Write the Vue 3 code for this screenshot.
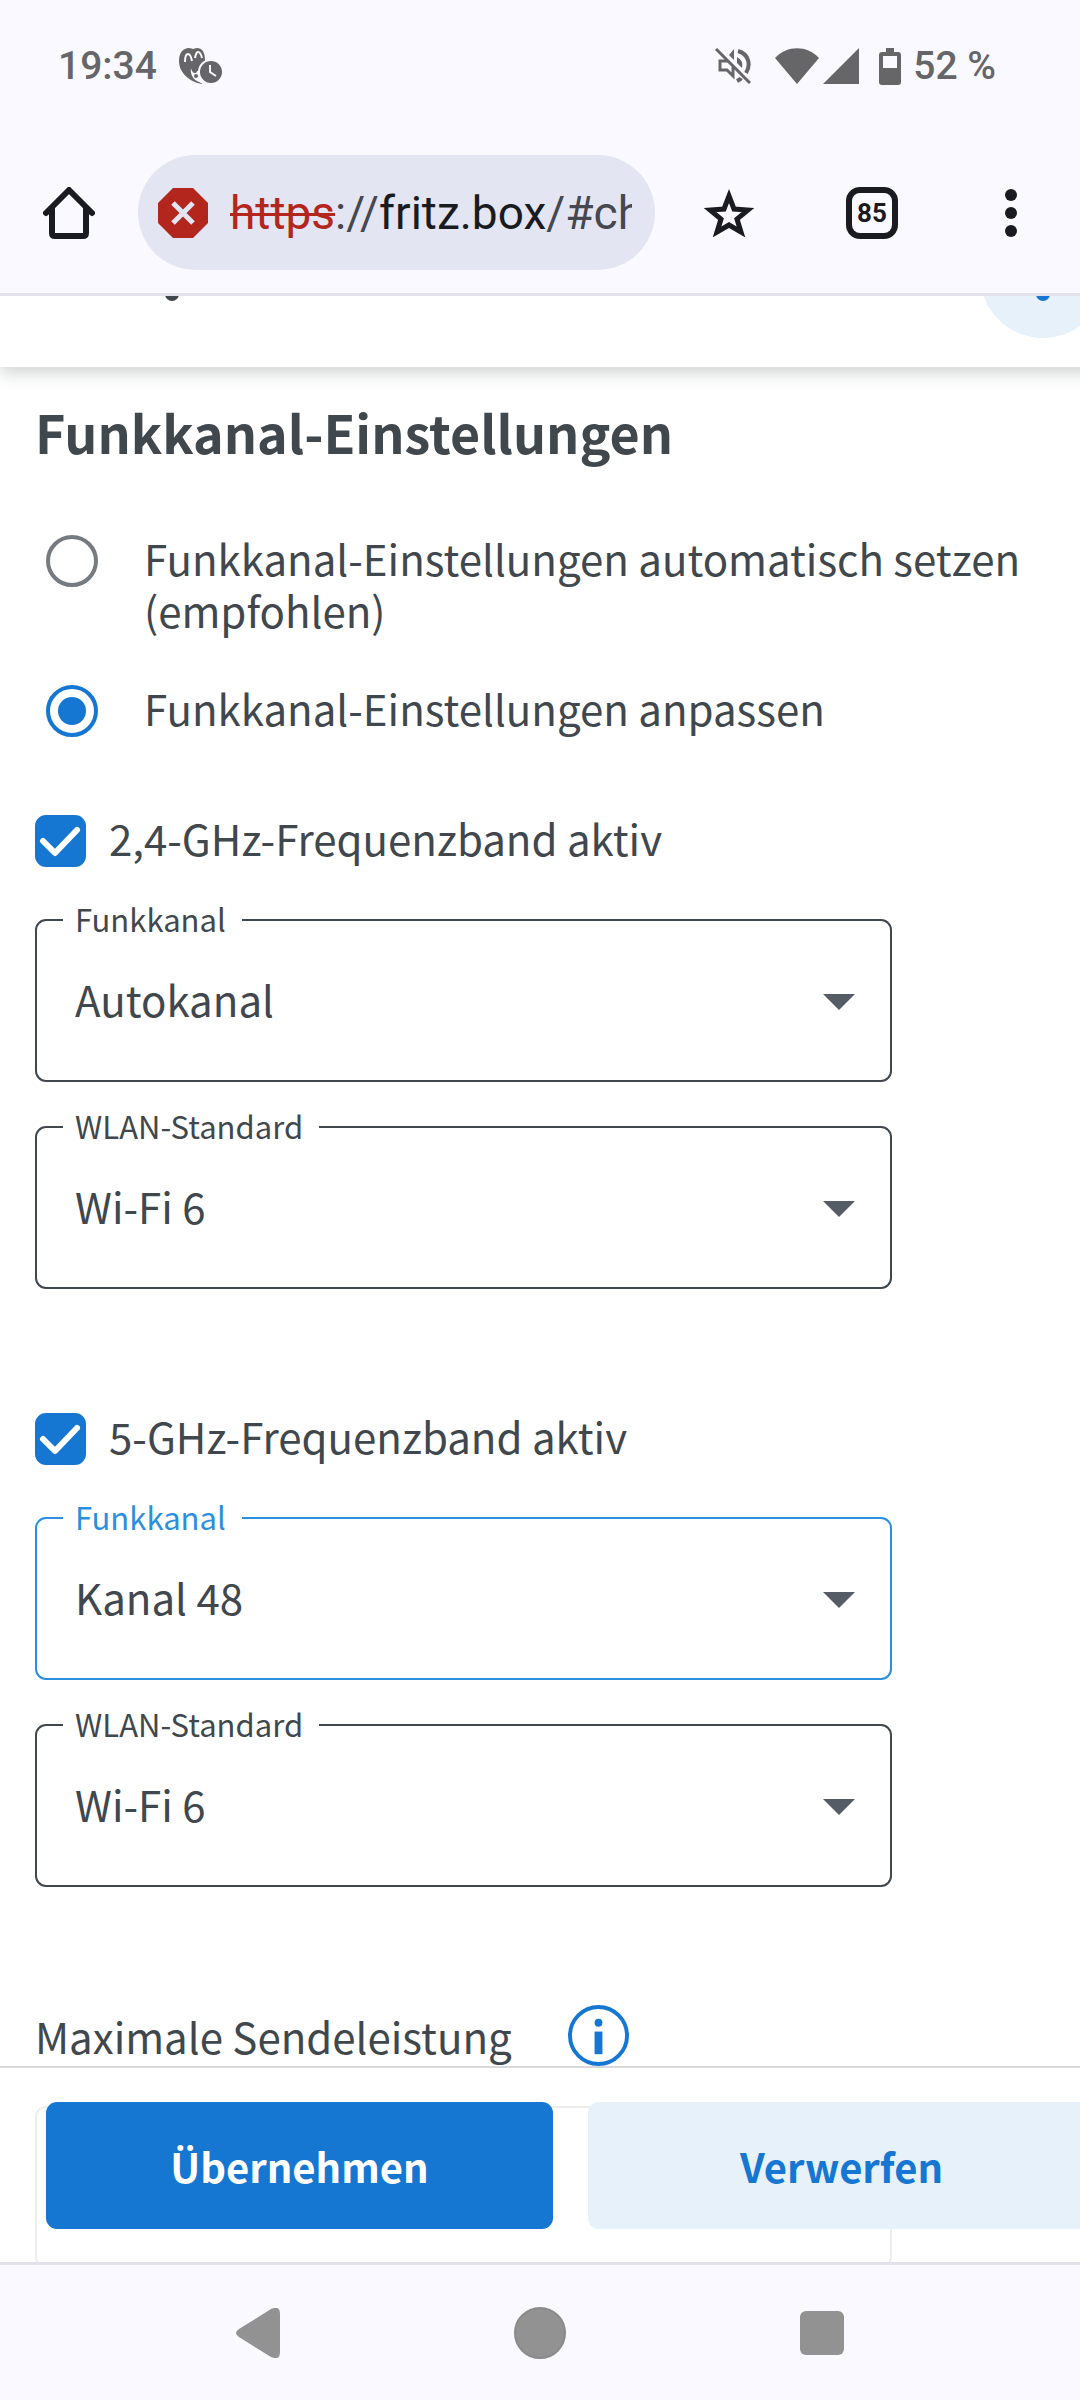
<script setup>
import { ref } from 'vue'

const mode = ref('manual')
const bands = ref([
  {
    id: 'b24',
    label: '2,4-GHz-Frequenzband aktiv',
    active: true,
    fields: [
      { id: 'channel', label: 'Funkkanal', value: 'Autokanal', focused: false },
      { id: 'standard', label: 'WLAN-Standard', value: 'Wi-Fi 6', focused: false },
    ],
  },
  {
    id: 'b5',
    label: '5-GHz-Frequenzband aktiv',
    active: true,
    fields: [
      { id: 'channel', label: 'Funkkanal', value: 'Kanal 48', focused: true },
      { id: 'standard', label: 'WLAN-Standard', value: 'Wi-Fi 6', focused: false },
    ],
  },
])
</script>

<template>
  <div class="screen">
    <div class="status">
      <div class="status-group">
        <span>19:34</span>
        <svg width="44" height="36" viewBox="0 0 44 36" fill="#666668">
          <path d="M0 13C0 5 4 0 10 0c2 0 3 1 4 1s2-1 4-1c5 0 8 4 8 12l-3 22v2C11 34 0 25 0 13Z" />
          <path d="M6 14c0-6 1-8 3-8s3 2 4 7M16 10c1-4 1-6 3-6s3 2 4 6" fill="none" stroke="#faf9ff" stroke-width="2" />
          <path d="M12 20c-1 6 2 12 8 14l4 2V22l-6 1-3 2-3-5Z" fill="#faf9ff" />
          <path d="M12 20c1 4 2 5 5 5l3-5-4-3Z" />
          <circle cx="17" cy="28" r="2" />
          <circle cx="32" cy="24" r="13" fill="#faf9ff" />
          <circle cx="32" cy="24" r="11" />
          <path d="M31 17v7l6 4" fill="none" stroke="#faf9ff" stroke-width="2" />
        </svg>
      </div>
      <div class="status-group right">
        <svg class="mute" width="36" height="36" viewBox="0 0 36 36" fill="none" stroke="#666668" stroke-width="4">
          <path d="M1 1l34 34" stroke-width="3" />
          <path d="M13 13H5v9h7l6 6V19" stroke-width="3" />
          <path d="M23 3c11 3 13 14 8 22M22 33c2-1 3-1 4-3" />
          <path d="M19 1v11l-5-5ZM22 9c5 3 6 6 5 11l-5-5Z" fill="#666668" stroke="none" />
        </svg>
        <svg class="wifi" width="44" height="36" viewBox="0 0 44 36" fill="#666668">
          <path d="M22 36 0 10C12-3 32-3 44 10Z" />
        </svg>
        <svg class="signal" width="36" height="36" viewBox="0 0 36 36" fill="#666668"><path d="M0 36 36 0v36Z" /></svg>
        <svg class="battery" width="22" height="37" viewBox="0 0 22 37">
          <path d="M7 0h8v4h4q3 0 3 3v27q0 3-3 3H3q-3 0-3-3V7q0-3 3-3h4Z" fill="#666668" />
          <path d="M4 8h14v12H4Z" fill="#faf9ff" />
        </svg>
        <span>52 %</span>
      </div>
    </div>

    <div class="toolbar">
      <button class="tool home" aria-label="Startseite">
        <svg width="52" height="52" viewBox="0 0 52 52" fill="none" stroke="#1a1b20" stroke-width="6" stroke-linejoin="round" stroke-linecap="round">
          <path d="M3 26 26 3l23 23" />
          <path d="M9 22v24q0 3 3 3h28q3 0 3-3V22" />
        </svg>
      </button>
      <div class="omnibox">
        <svg width="50" height="50" viewBox="0 0 50 50">
          <path d="M15 0h20l15 15v20L35 50H15L0 35V15Z" fill="#b3261e" />
          <path d="m15 15 20 20m0-20L15 35" stroke="#e3e5f2" stroke-width="5" />
        </svg>
        <div class="url"><s>https</s>://<b>fritz.box</b>/#ch</div>
      </div>
      <button class="tool star" aria-label="Lesezeichen">
        <svg width="50" height="48" viewBox="0 0 50 48" fill="none" stroke="#1a1b20" stroke-width="5">
          <path d="m25 7 5 13 14 1-11 9 4 13-12-7-12 7 4-13L6 21l14-1Z" />
        </svg>
      </button>
      <button class="tool tabs" aria-label="Tabs"><span>85</span></button>
      <button class="tool menu" aria-label="Menü">
        <svg width="12" height="48" viewBox="0 0 12 48" fill="#1a1b20">
          <circle cx="6" cy="6" r="6" /><circle cx="6" cy="24" r="6" /><circle cx="6" cy="42" r="6" />
        </svg>
      </button>
    </div>

    <main class="view">
      <header class="site-header">
        <svg class="crumb" width="14" height="14" viewBox="0 0 14 14"><circle cx="7" cy="7" r="7" fill="#40474d" /></svg>
        <button class="help" aria-label="Hilfe">
          <svg width="14" height="14" viewBox="0 0 14 14"><circle cx="7" cy="7" r="7" fill="#1677d2" /></svg>
        </button>
      </header>

      <form class="content" @submit.prevent>
        <h1>Funkkanal-Einstellungen</h1>

        <label class="radio">
          <input v-model="mode" type="radio" name="mode" value="auto" />
          <span>Funkkanal-Einstellungen automatisch setzen (empfohlen)</span>
        </label>
        <label class="radio">
          <input v-model="mode" type="radio" name="mode" value="manual" />
          <span>Funkkanal-Einstellungen anpassen</span>
        </label>

        <section v-for="band in bands" :key="band.id" class="band">
          <label class="check">
            <span class="box">
              <input v-model="band.active" type="checkbox" />
              <svg v-if="band.active" width="51" height="52" viewBox="0 0 51 52" fill="none" stroke="#fff" stroke-width="6" stroke-linecap="round" stroke-linejoin="round">
                <path d="m8 26 12 12 22-23" />
              </svg>
            </span>
            <span>{{ band.label }}</span>
          </label>
          <div v-for="field in band.fields" :key="field.id" class="field" :class="{ focused: field.focused }">
            <label :for="band.id + field.id">{{ field.label }}</label>
            <select :id="band.id + field.id" v-model="field.value">
              <option>{{ field.value }}</option>
            </select>
            <svg class="arrow" width="32" height="16" viewBox="0 0 32 16"><path d="M0 0h32L16 16Z" fill="#555c66" /></svg>
          </div>
        </section>

        <div class="power">
          <span>Maximale Sendeleistung</span>
          <button type="button" class="info" aria-label="Information">
            <svg width="61" height="61" viewBox="0 0 62 62">
              <circle cx="31" cy="31" r="29" fill="none" stroke="#1677d2" stroke-width="4" />
              <circle cx="31" cy="18" r="4" fill="#1677d2" />
              <path d="M27 27h8v23h-8Z" fill="#1677d2" />
            </svg>
          </button>
        </div>
        <div class="field-outline"></div>
      </form>

      <div class="actions">
        <button class="primary">Übernehmen</button>
        <button class="secondary">Verwerfen</button>
      </div>
    </main>

    <nav class="nav">
      <button aria-label="Zurück">
        <svg width="44" height="50" viewBox="0 0 44 50" fill="#929293"><path d="M35 1q9-4 9 5v38q0 9-9 5L3 29q-6-4 0-8Z" /></svg>
      </button>
      <button aria-label="Startbildschirm">
        <svg width="52" height="52" viewBox="0 0 52 52"><circle cx="26" cy="26" r="25" fill="#929293" stroke="#8a8a8b" stroke-width="2" /></svg>
      </button>
      <button aria-label="Übersicht">
        <svg width="44" height="44" viewBox="0 0 44 44" fill="#929293"><rect width="44" height="44" rx="6" /></svg>
      </button>
    </nav>
  </div>
</template>

<style>
body {
  margin: 0;
  background: #fff;
}
</style>

<style scoped>
.screen {
  display: flex;
  flex-direction: column;
  min-height: 100vh;
  overflow: hidden;
  background: #fff;
  color: #40474d;
  font: 42px/52px "Noto Sans CJK SC", "Noto Sans", sans-serif;
}
svg {
  display: block;
  flex: none;
}
button {
  display: flex;
  align-items: center;
  justify-content: center;
  flex: none;
  border: 0;
  padding: 0;
  background: none;
  color: inherit;
  font: inherit;
}

.status {
  display: flex;
  justify-content: space-between;
  align-items: center;
  height: 132px;
  padding: 0 84px 0 58px;
  background: #faf9ff;
  color: #666668;
  font: 500 39px/48px Roboto, sans-serif;
}
.status-group {
  display: flex;
  align-items: center;
  gap: 22px;
}
.status-group.right {
  gap: 0;
}
.mute { margin-right: 24px; }
.wifi { margin-right: 4px; }
.signal { margin-right: 20px; }
.battery { margin-right: 12px; }

.toolbar {
  display: flex;
  align-items: center;
  height: 161px;
  background: #faf9ff;
  border-bottom: 3px solid #e3e1ec;
}
.tool {
  width: 140px;
  height: 120px;
}
.home,
.menu {
  width: 138px;
}
.star {
  width: 147px;
}
.omnibox {
  display: flex;
  flex: 1;
  align-items: center;
  gap: 22px;
  min-width: 0;
  height: 115px;
  box-sizing: border-box;
  padding: 0 23px 0 20px;
  border-radius: 60px;
  background: #e3e5f2;
}
.url {
  flex: 1;
  overflow: hidden;
  white-space: nowrap;
  color: #46474f;
  font: 46px/60px Roboto, sans-serif;
}
.url s {
  color: #b3261e;
  text-decoration-thickness: 3px;
}
.url b {
  color: #1a1b20;
  font-weight: 400;
}
.tabs span {
  display: flex;
  align-items: center;
  justify-content: center;
  width: 52px;
  height: 52px;
  box-sizing: border-box;
  border: 6px solid #1a1b20;
  border-radius: 14px;
  color: #1a1b20;
  font: 700 26px/32px Roboto, sans-serif;
}

.view {
  position: relative;
  flex: 1;
  overflow: hidden;
}
.site-header {
  display: flex;
  align-items: flex-end;
  justify-content: space-between;
  height: 71px;
  margin-right: -26px;
  padding-left: 165px;
  background: #fff;
  box-shadow: 0 6px 16px rgba(40, 50, 48, 0.22);
}
.crumb {
  align-self: flex-start;
  margin-top: -9px;
}
.help {
  width: 126px;
  height: 126px;
  margin-bottom: 29px;
  border-radius: 50%;
  background: #e6f1fa;
}
.help svg {
  margin-top: 38px;
}

.content {
  margin-bottom: -6px;
  padding: 26px 35px 0;
}
h1 {
  margin: 0 0 61px;
  font-size: 52px;
  line-height: 78px;
  font-weight: 700;
}
.radio {
  display: flex;
  align-items: flex-start;
  gap: 46px;
  margin-bottom: 46px;
  padding-left: 11px;
}
.radio input {
  flex: none;
  appearance: none;
  box-sizing: border-box;
  width: 52px;
  height: 52px;
  margin: 3px 0 0;
  border: 4px solid #757b80;
  border-radius: 50%;
}
.radio input:checked {
  border-color: #1677d2;
  background: #1677d2 content-box;
  padding: 8px;
}
.band {
  display: flex;
  flex-direction: column;
  gap: 44px;
  padding: 29px 0 92px;
}
.check {
  display: flex;
  align-items: flex-start;
  gap: 23px;
  margin-bottom: 8px;
}
.box {
  position: relative;
  margin-top: 3px;
}
.box input {
  display: block;
  appearance: none;
  box-sizing: border-box;
  width: 51px;
  height: 52px;
  margin: 0;
  border: 2px solid #757b80;
  border-radius: 11px;
}
.box input:checked {
  border-color: #1677d2;
  background: #1677d2;
}
.box svg {
  position: absolute;
  inset: 0;
  pointer-events: none;
}
.field {
  position: relative;
  max-width: 857px;
}
.field label {
  position: absolute;
  top: -22px;
  left: 28px;
  padding: 0 16px 0 12px;
  background: #fff;
  font-size: 31px;
  line-height: 44px;
}
.field select {
  display: block;
  appearance: none;
  box-sizing: border-box;
  width: 100%;
  height: 163px;
  padding: 0 80px 3px 38px;
  border: 2px solid #40474d;
  border-radius: 11px;
  background: #fff;
  color: inherit;
  font: inherit;
}
.field.focused label {
  color: #2a8fe0;
}
.field.focused select {
  border-color: #2a8fe0;
}
.arrow {
  position: absolute;
  top: 75px;
  right: 37px;
  pointer-events: none;
}
.power {
  display: flex;
  align-items: center;
  gap: 56px;
  margin-top: 26px;
}
.field-outline {
  max-width: 857px;
  height: 162px;
  margin-top: 40px;
  box-sizing: border-box;
  border: 2px solid #40474d;
  border-radius: 11px;
}
.actions {
  position: absolute;
  right: 0;
  bottom: 0;
  left: 0;
  display: flex;
  gap: 35px;
  padding: 34px 0 33px 46px;
  border-top: 2px solid #d9d9d9;
  background: rgba(255, 255, 255, 0.9);
}
.actions button {
  width: 507px;
  height: 127px;
  border-radius: 11px;
  font-size: 40px;
  font-weight: 700;
}
.actions .primary {
  background: #1677d2;
  color: #fff;
}
.actions .secondary {
  background: #e6f1fa;
  color: #1677d2;
}

.nav {
  display: flex;
  align-items: center;
  justify-content: center;
  height: 135px;
  border-top: 3px solid #e3e1ec;
  background: #faf9ff;
}
.nav button {
  width: 282px;
  height: 96px;
}
</style>
